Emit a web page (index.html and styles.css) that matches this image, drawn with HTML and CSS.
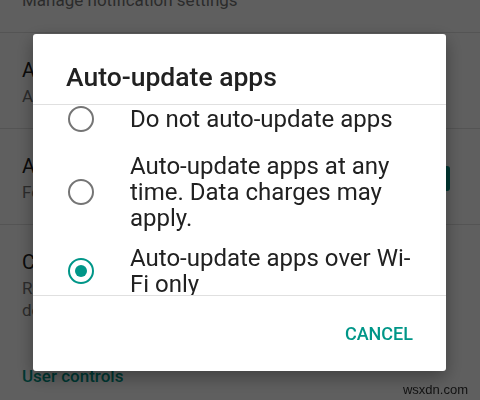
FILE: index.html
```html
<!DOCTYPE html>
<html>
<head>
<meta charset="utf-8">
<link rel="stylesheet" href="styles.css">
</head>
<body>
<div class="page">
  <div class="row first">
    <div class="row-text">
      <div class="t">Notifications</div>
      <div class="s">Manage notification settings</div>
    </div>
  </div>
  <div class="row">
    <div class="row-text">
      <div class="t">Auto-update apps</div>
      <div class="s">Auto-update apps over Wi-Fi only</div>
    </div>
  </div>
  <div class="row">
    <div class="row-text">
      <div class="t">Add icon to Home screen</div>
      <div class="s">For new apps</div>
    </div>
    <span class="check"></span>
  </div>
  <div class="row">
    <div class="row-text">
      <div class="t">Clear local search history</div>
      <div class="s">Remove searches you have performed from this<br>device</div>
    </div>
  </div>
  <div class="cat">User controls</div>
</div>

<div class="scrim"></div>

<div class="dialog">
  <div class="dlg-title">Auto-update apps</div>
  <div class="options">
    <div class="options-inner">
      <div class="opt"><span class="radio"></span><span class="opt-text">Do not auto-update apps</span></div>
      <div class="opt"><span class="radio"></span><span class="opt-text">Auto-update apps at any time. Data charges may apply.</span></div>
      <div class="opt"><span class="radio on"></span><span class="opt-text">Auto-update apps over Wi-Fi only</span></div>
    </div>
  </div>
  <div class="actions"><span class="btn">CANCEL</span></div>
</div>

<div class="wm">wsxdn.com</div>
</body>
</html>
```

FILE: styles.css
```css
* { box-sizing: border-box; }

body {
  margin: 0;
  width: 480px;
  height: 400px;
  overflow: hidden;
  background: #fff;
  font-family: Roboto, "Noto Sans", sans-serif;
}

.row {
  display: flex;
  align-items: center;
  border-top: 1px solid #e0e0e0;
  padding: 24px 30px 21px 22px;
}

.row.first {
  margin-top: -64px;
  border-top: none;
  padding-top: 25px;
}

.row-text { flex: 1; }

.t {
  font-size: 20px;
  line-height: 26px;
  color: #212121;
}

.s {
  font-size: 17px;
  line-height: 22px;
  color: #757575;
  margin-top: 2px;
}

.check {
  flex: none;
  width: 25px;
  height: 25px;
  border-radius: 3px;
  background: #009688;
}

.cat {
  padding: 23px 22px 0;
  font-size: 17px;
  line-height: 22px;
  font-weight: 500;
  color: #009688;
}

.scrim {
  position: fixed;
  inset: 0;
  background: rgba(0, 0, 0, 0.627);
}

.dialog {
  position: fixed;
  left: 33px;
  top: 34px;
  width: 413px;
  height: 337px;
  background: #fff;
  border-radius: 3px;
  box-shadow: 0 6px 18px rgba(0, 0, 0, 0.35);
  display: flex;
  flex-direction: column;
  overflow: hidden;
}

.dlg-title {
  flex: none;
  height: 71px;
  padding: 28px 33px 0;
  font-size: 26.5px;
  line-height: 30px;
  font-weight: 500;
  color: #212121;
  border-bottom: 1px solid #e0e0e0;
}

.options {
  flex: none;
  height: 191px;
  overflow: hidden;
  border-bottom: 1px solid #e0e0e0;
}

.options-inner { margin-top: -13px; }

.opt {
  display: flex;
  align-items: center;
  gap: 36px;
  min-height: 54px;
  padding: 7px 24px 7px 35px;
}

.radio {
  flex: none;
  width: 26px;
  height: 26px;
  border: 2.5px solid #757575;
  border-radius: 50%;
  display: flex;
  align-items: center;
  justify-content: center;
}

.radio.on { border-color: #009688; }

.radio.on::after {
  content: "";
  width: 12px;
  height: 12px;
  border-radius: 50%;
  background: #009688;
}

.opt-text {
  font-size: 24px;
  line-height: 26px;
  color: #212121;
}

.actions {
  flex: 1;
  display: flex;
  justify-content: flex-end;
  align-items: center;
  padding-right: 25px;
}

.btn {
  padding: 8px;
  font-size: 18px;
  line-height: 22px;
  font-weight: 500;
  color: #009688;
}

.wm {
  position: fixed;
  right: 12px;
  bottom: 3px;
  font-family: "Liberation Sans", Arial, sans-serif;
  font-size: 13px;
  color: #111;
}
```
